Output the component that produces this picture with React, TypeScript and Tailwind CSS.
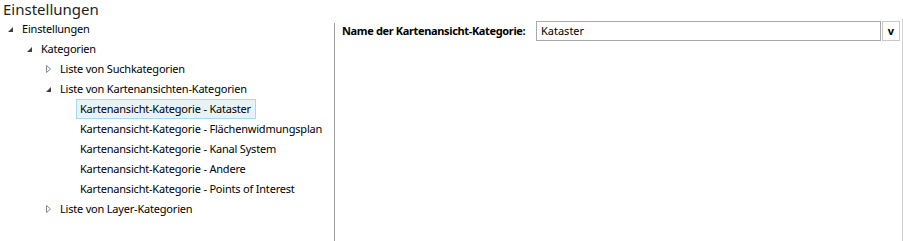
import React from "react";

type Node = {
  label: string;
  level: number;
  state?: "open" | "closed";
  selected?: boolean;
};

const tree: Node[] = [
  { label: "Einstellungen", level: 0, state: "open" },
  { label: "Kategorien", level: 1, state: "open" },
  { label: "Liste von Suchkategorien", level: 2, state: "closed" },
  { label: "Liste von Kartenansichten-Kategorien", level: 2, state: "open" },
  { label: "Kartenansicht-Kategorie - Kataster", level: 3, selected: true },
  { label: "Kartenansicht-Kategorie - Flächenwidmungsplan", level: 3 },
  { label: "Kartenansicht-Kategorie - Kanal System", level: 3 },
  { label: "Kartenansicht-Kategorie - Andere", level: 3 },
  { label: "Kartenansicht-Kategorie - Points of Interest", level: 3 },
  { label: "Liste von Layer-Kategorien", level: 2, state: "closed" },
];

const indent = ["pl-[3px]", "pl-[22px]", "pl-[41px]", "pl-[60px]"];

function Arrow({ state }: { state?: "open" | "closed" }) {
  if (state === "open") {
    return (
      <svg width="19" height="16" viewBox="0 0 19 16" className="shrink-0">
        <path d="M10 6 L10 11 L5 11 Z" fill="#404040" />
      </svg>
    );
  }
  return (
    <svg width="19" height="16" viewBox="0 0 19 16" className="shrink-0">
      <path d="M5.5 4.5 L9.5 8 L5.5 11.5 Z" fill="none" stroke="#8a8a8a" strokeWidth="1" />
    </svg>
  );
}

export default function App() {
  return (
    <div className="w-[903px] h-[241px] bg-white flex flex-col overflow-hidden font-['Noto_Sans',sans-serif] text-[11px] text-black whitespace-nowrap">
      <div className="h-[19px] pl-[3px] text-[15px] leading-[19px] text-[#1e1e1e]">Einstellungen</div>
      <div className="flex flex-1 border-r border-[#d0d0d0]">
        <div className="w-[334px] shrink-0 flex flex-col tracking-[-0.2px]">
          {tree.map((n) => (
            <div key={n.label} className={`h-[20px] flex items-center ${indent[n.level]}`}>
              {n.level < 3 && <Arrow state={n.state} />}
              <span
                className={
                  n.selected
                    ? "h-[20px] pl-[3px] pr-[4px] ml-[16px] flex items-center border border-[#a9d8f3] bg-[#e5f3fc]"
                    : n.level === 3
                    ? "pl-[4px] ml-[16px]"
                    : ""
                }
              >
                {n.label}
              </span>
            </div>
          ))}
        </div>
        <div className="flex-1 border-l border-[#a0a0a0] mt-[4px] pl-[7px]">
          <div className="flex items-center h-[20px] -mt-[2px]">
            <span className="w-[194px] font-bold tracking-[-0.35px]">Name der Kartenansicht-Kategorie:</span>
            <div className="w-[345px] h-[20px] border border-[#a8a8a8] flex items-center px-[4px]">Kataster</div>
            <div className="w-[18px] h-[20px] border border-[#c8c8c8] ml-[1px] flex items-center justify-center font-bold text-[11px]">v</div>
          </div>
        </div>
      </div>
    </div>
  );
}
